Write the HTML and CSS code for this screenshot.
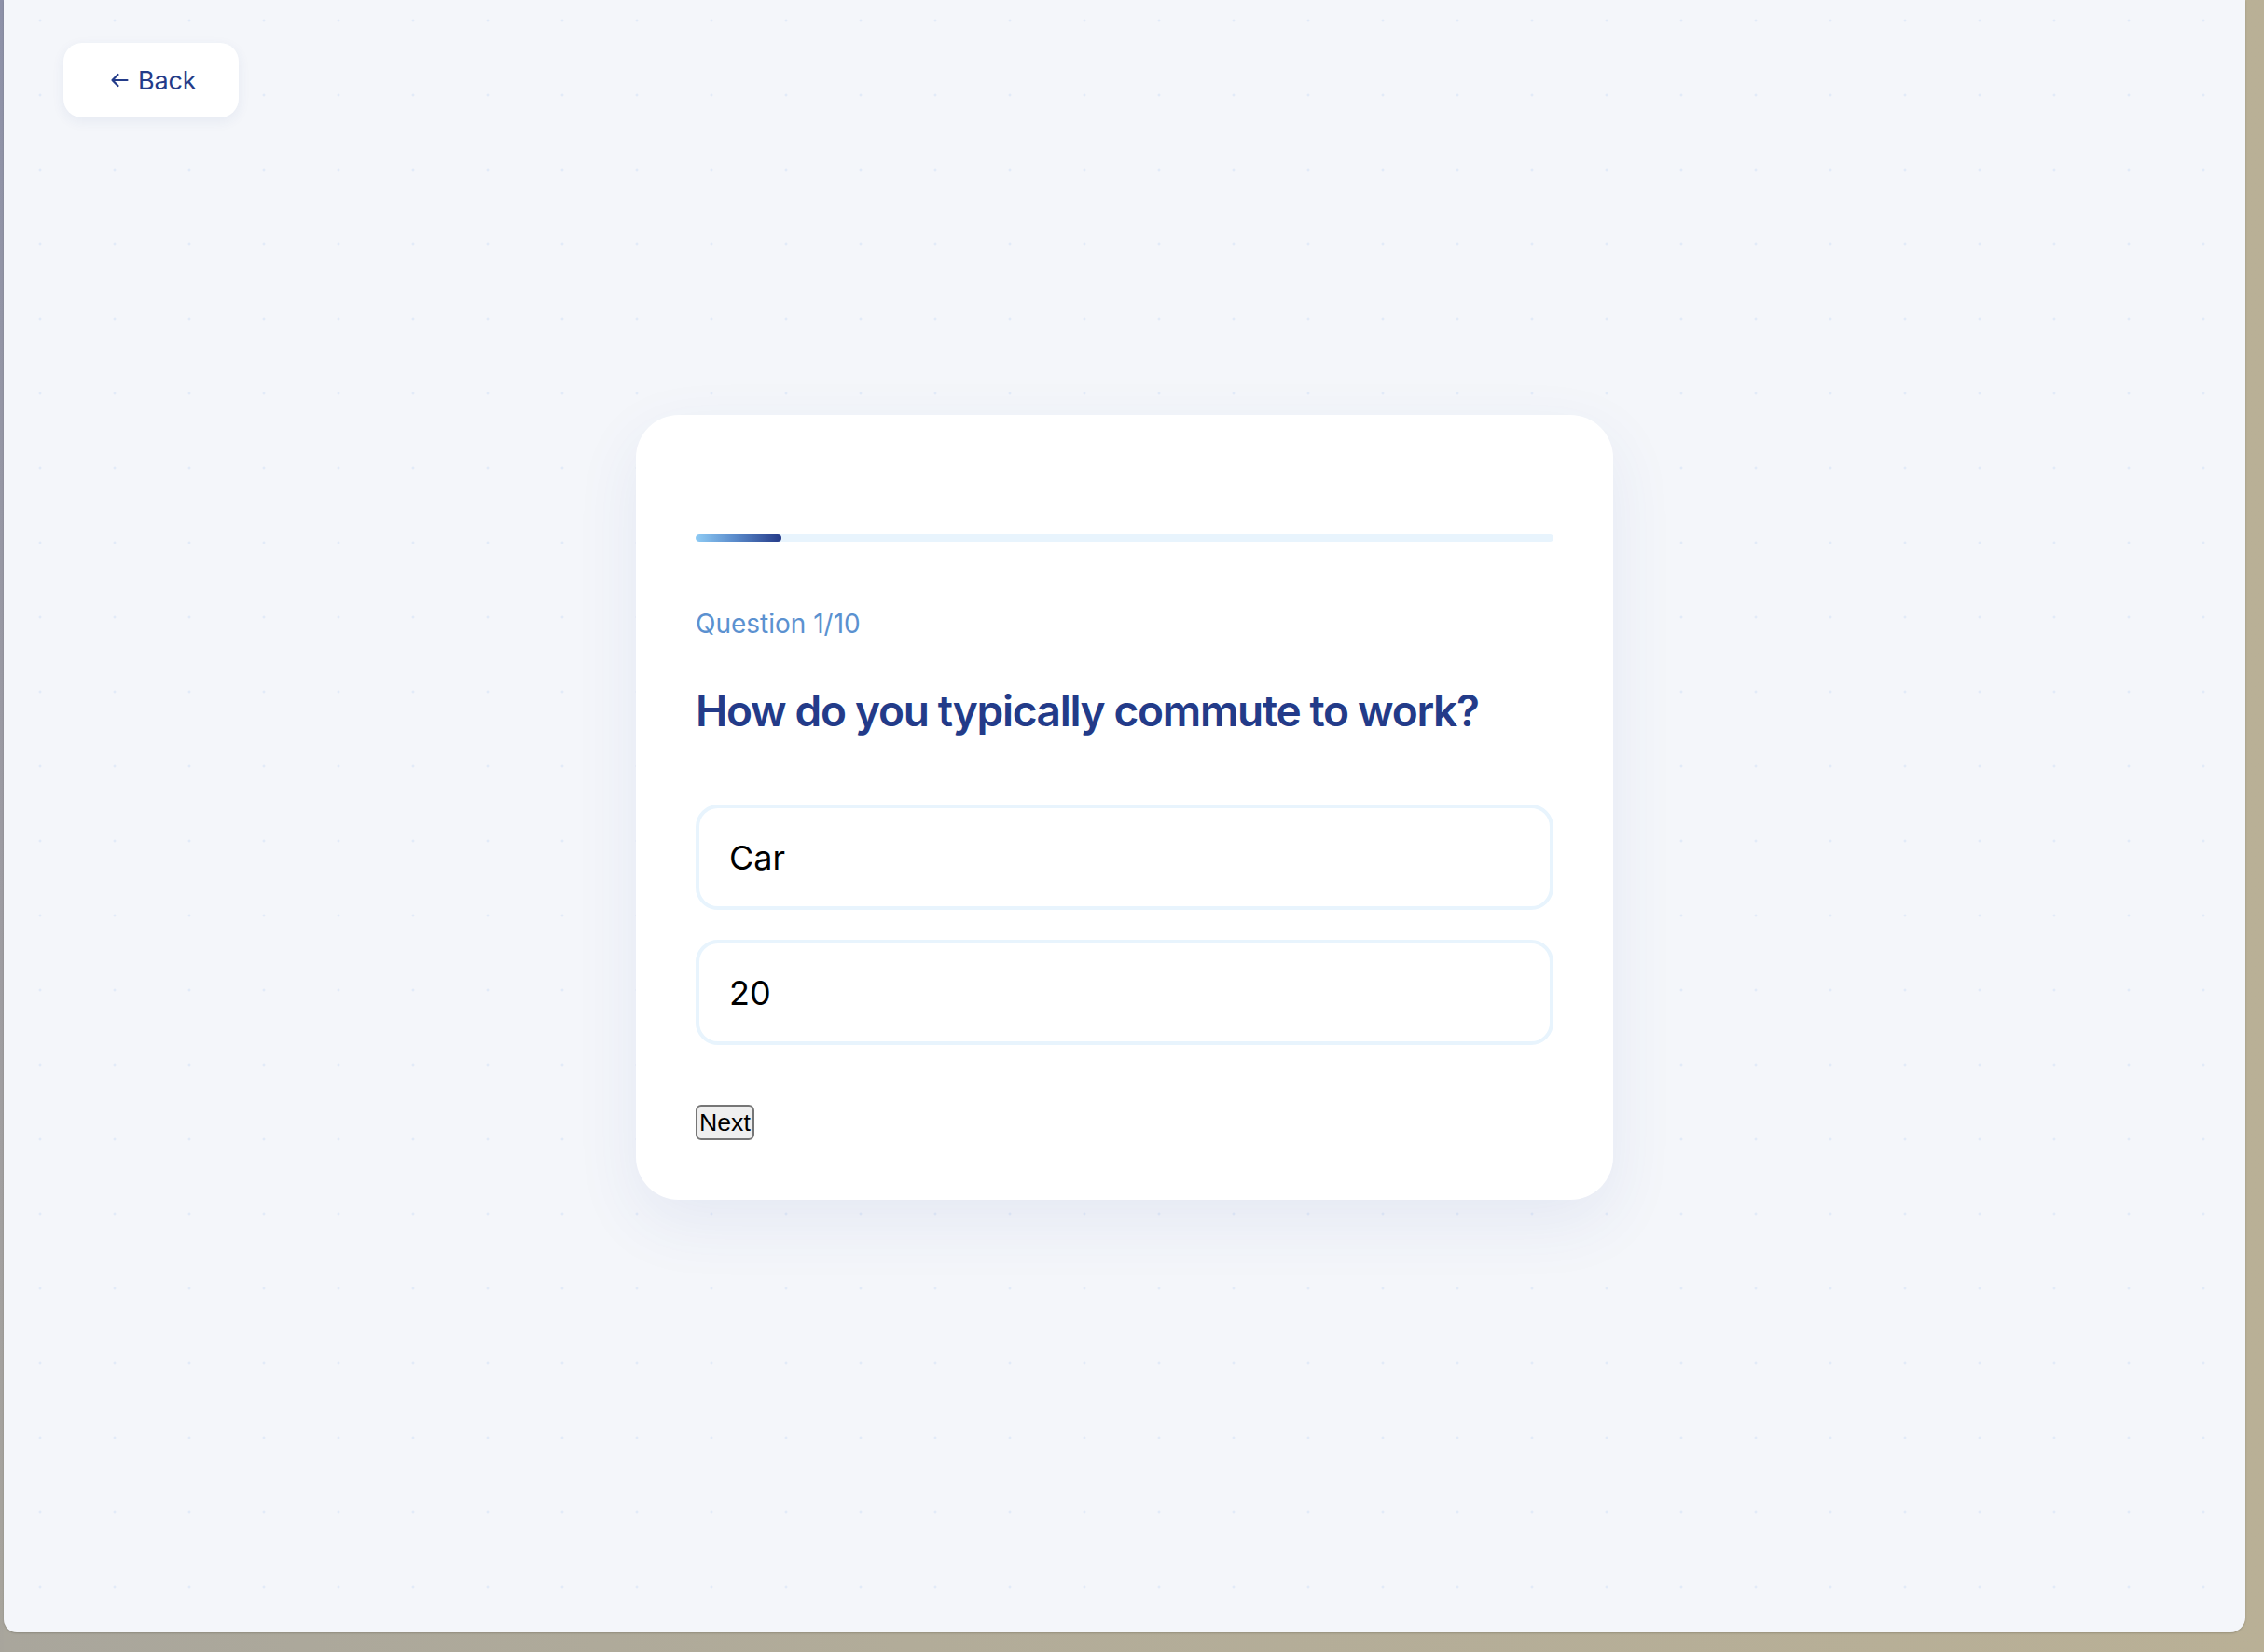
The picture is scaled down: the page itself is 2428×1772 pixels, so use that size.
FILE: index.html
```html
<!DOCTYPE html>
<html lang="en">
<head>
<meta charset="utf-8">
<title>Commute Survey</title>
<link rel="stylesheet" href="styles.css">
</head>
<body>
<div class="window">
  <button class="back-btn" type="button">
    <svg class="back-icon" width="20" height="16" viewBox="0 0 20 16" aria-hidden="true">
      <path d="M18.5 8H2.5M8.5 2L2.5 8L8.5 14" fill="none" stroke="#233b89" stroke-width="2.2" stroke-linecap="round" stroke-linejoin="round"/>
    </svg>
    <span>Back</span>
  </button>

  <main class="card">
    <div class="progress"><div class="progress-fill" style="width:10%"></div></div>
    <p class="q-count">Question 1/10</p>
    <h1 class="q-title">How do you typically commute to work?</h1>
    <div class="fields">
      <input class="field" type="text" value="Car">
      <input class="field" type="text" value="20">
    </div>
    <button class="next-btn" type="button">Next</button>
  </main>
</div>
</body>
</html>
```

FILE: styles.css
```css
html, body {
  margin: 0;
  padding: 0;
}

body {
  width: 2428px;
  height: 1772px;
  overflow: hidden;
  background:
    linear-gradient(to bottom, #8d91a8 0%, #9c9ba2 50%, #a8a59c 100%) 0 0 / 4px 100% no-repeat,
    linear-gradient(to right, #a9a69c 0%, #b2ac99 40%, #b9b096 100%);
  font-family: Inter, "Noto Sans", "Liberation Sans", sans-serif;
}

.window {
  position: relative;
  margin-left: 4px;
  width: 2404px;
  height: 1751px;
  box-sizing: border-box;
  padding-bottom: 19px;
  border-radius: 0 0 16px 14px;
  background-color: #f4f6fa;
  background-image: radial-gradient(circle, #e2ebf8 1px, rgba(226, 235, 248, 0) 1.8px);
  background-size: 80px 80px;
  background-position: -1px -18px;
  box-shadow: 0 1px 2px rgba(60, 55, 40, 0.25);
  display: flex;
  align-items: center;
  justify-content: center;
}

.back-btn {
  position: absolute;
  top: 46px;
  left: 64px;
  height: 80px;
  width: 188px;
  box-sizing: border-box;
  padding: 0 0 0 50px;
  border: none;
  border-radius: 20px;
  background: #ffffff;
  box-shadow: 0 4px 14px rgba(40, 70, 140, 0.07);
  display: flex;
  align-items: center;
  justify-content: flex-start;
  gap: 10px;
  font-family: Inter, "Noto Sans", sans-serif;
  font-size: 27px;
  letter-spacing: -0.2px;
  font-weight: 400;
  color: #233b89;
  cursor: pointer;
}

.back-icon {
  display: block;
}

.card {
  width: 1048px;
  box-sizing: border-box;
  padding: 128px 64px 64px;
  background: #ffffff;
  border-radius: 46px;
  box-shadow: 0 24px 70px rgba(45, 80, 160, 0.08);
  display: flex;
  flex-direction: column;
  align-items: flex-start;
}

.progress {
  width: 100%;
  height: 8px;
  border-radius: 4px;
  background: #e8f4fd;
  overflow: hidden;
}

.progress-fill {
  height: 100%;
  border-radius: 4px;
  background: linear-gradient(to right, #8ecbf4 0%, #5b8ccc 45%, #253a88 100%);
}

.q-count {
  margin: 67px 0 0;
  font-size: 28px;
  line-height: 42px;
  font-weight: 400;
  color: #5b91d0;
}

.q-title {
  margin: 42px 0 0;
  font-size: 46px;
  line-height: 60px;
  font-weight: 600;
  letter-spacing: -1.3px;
  color: #233b89;
}

.fields {
  width: 100%;
  margin-top: 71px;
  display: flex;
  flex-direction: column;
  gap: 32px;
}

.field {
  width: 100%;
  height: 113px;
  box-sizing: border-box;
  padding: 2px 32px 0;
  border: 4px solid #e8f4fd;
  border-radius: 24px;
  background: #ffffff;
  font-family: Inter, "Noto Sans", sans-serif;
  font-size: 36px;
  color: #000000;
  outline: none;
}

.next-btn {
  margin-top: 64px;
  padding: 2px 2px;
  border: 2px solid #767676;
  border-radius: 6px;
  background: #efefef;
  font-family: "Liberation Sans", Arial, sans-serif;
  font-size: 26.67px;
  line-height: 1.15;
  color: #000000;
  cursor: pointer;
}
```
